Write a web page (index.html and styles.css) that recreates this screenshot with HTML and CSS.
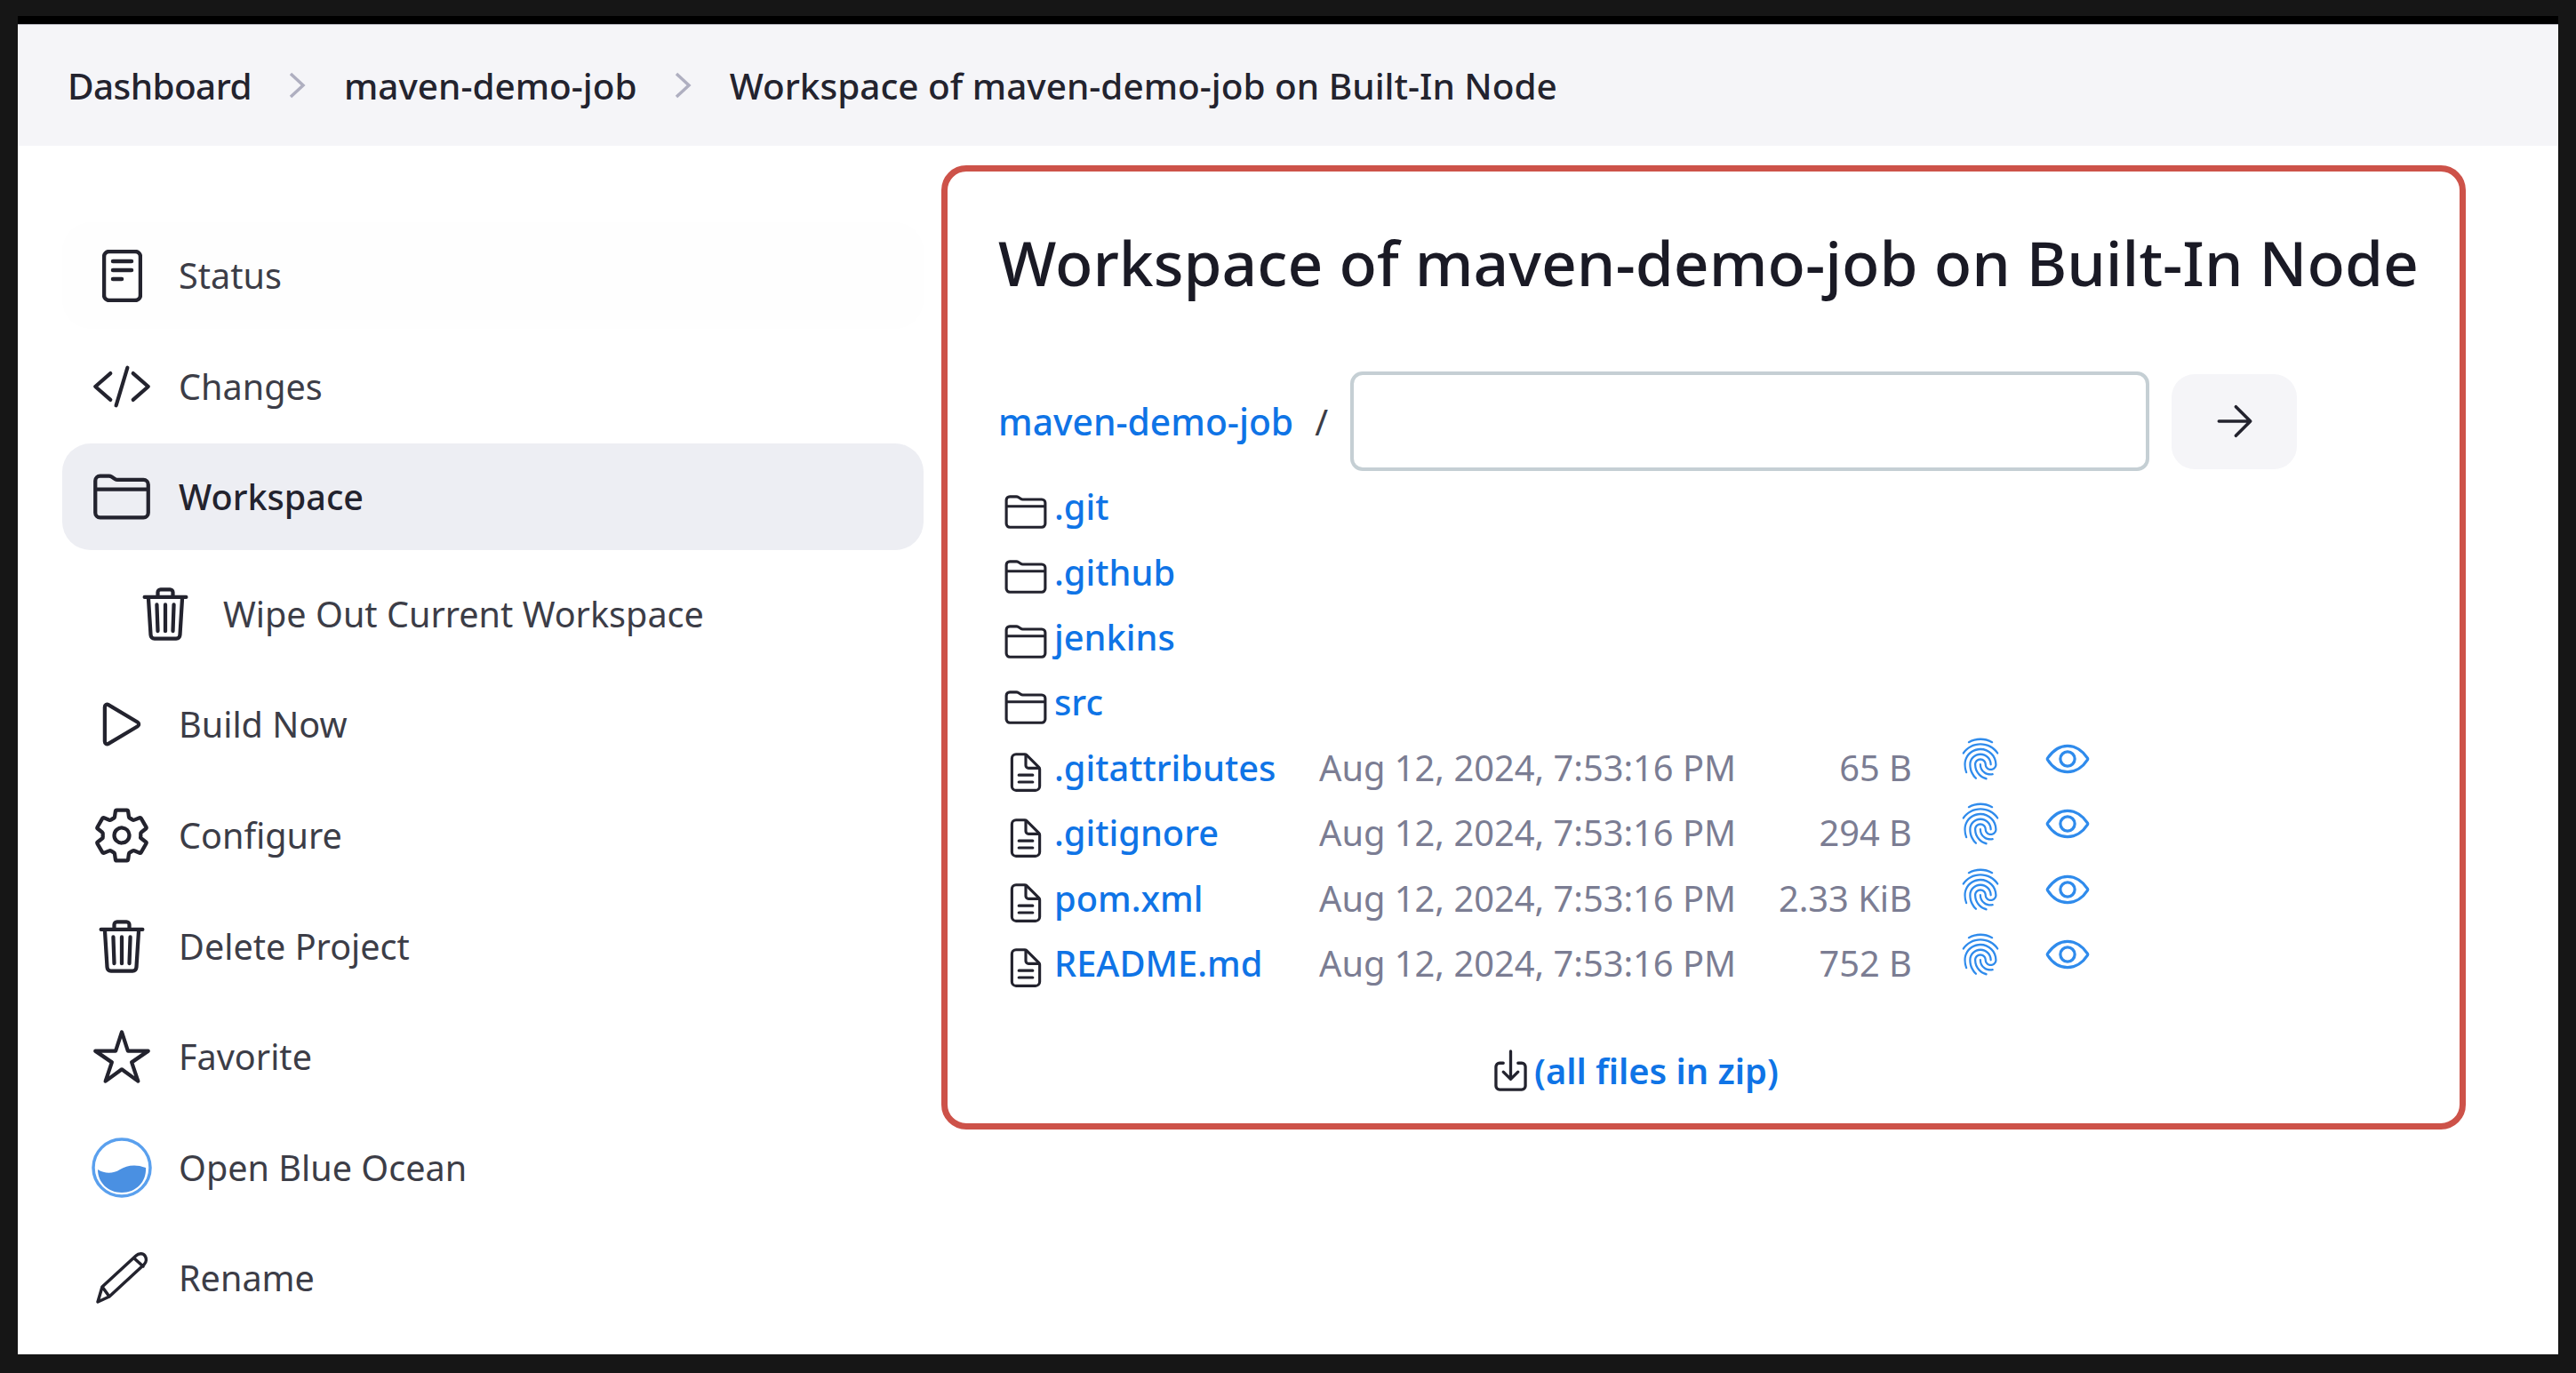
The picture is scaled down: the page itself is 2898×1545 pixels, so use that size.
FILE: index.html
```html
<!DOCTYPE html>
<html lang="en">
<head>
  <meta charset="UTF-8">
  <title>Workspace of maven-demo-job on Built-In Node</title>
  <link rel="stylesheet" href="styles.css">
</head>
<body>
  <svg class="sprites" xmlns="http://www.w3.org/2000/svg">
    <symbol id="i-code" viewBox="0 0 512 512"><path class="ln" d="M160 368L32 256l128-112M352 368l128-112-128-112M304 96l-96 320"/></symbol>
    <symbol id="i-folder" viewBox="0 0 512 512"><path class="ln" d="M440 432H72a40 40 0 01-40-40V120a40 40 0 0140-40h75.89a40 40 0 0122.19 6.72l27.84 18.56a40 40 0 0022.19 6.72H440a40 40 0 0140 40v240a40 40 0 01-40 40zM32 192h448"/></symbol>
    <symbol id="i-trash" viewBox="0 0 512 512"><path class="ln" d="M112 112l20 320c.95 18.49 14.4 32 32 32h184c17.67 0 30.87-13.51 32-32l20-320M80 112h352M192 112V72a23.93 23.93 0 0124-24h80a23.93 23.93 0 0124 24v40M256 176v224M184 176l8 224M328 176l-8 224"/></symbol>
    <symbol id="i-play" viewBox="0 0 512 512"><path class="ln" d="M112 111v290c0 17.44 17 28.52 31 20.16l247.9-148.37c12.12-7.25 12.12-26.33 0-33.58L143 90.84c-14-8.36-31 2.72-31 20.16z"/></symbol>
    <symbol id="i-gear" viewBox="0 0 512 512"><path class="ln" d="M262.29 192.31a64 64 0 1057.4 57.4 64.13 64.13 0 00-57.4-57.4zM416.39 256a154.34 154.34 0 01-1.53 20.79l45.21 35.46a10.81 10.81 0 012.45 13.75l-42.77 74a10.81 10.81 0 01-13.14 4.59l-44.9-18.08a16.11 16.11 0 00-15.17 1.75A164.48 164.48 0 01325 400.8a15.94 15.94 0 00-8.82 12.14l-6.73 47.89a11.08 11.08 0 01-10.68 9.17h-85.54a11.11 11.11 0 01-10.69-8.87l-6.72-47.82a16.07 16.07 0 00-9-12.22 155.3 155.3 0 01-21.46-12.57 16 16 0 00-15.11-1.71l-44.89 18.07a10.81 10.81 0 01-13.14-4.58l-42.77-74a10.8 10.8 0 012.45-13.75l38.21-30a16.05 16.05 0 006-14.08c-.36-4.17-.58-8.33-.58-12.5s.21-8.27.58-12.35a16 16 0 00-6.07-13.94l-38.19-30A10.81 10.81 0 0149.48 186l42.77-74a10.81 10.81 0 0113.14-4.59l44.9 18.08a16.11 16.11 0 0015.17-1.75A164.48 164.48 0 01187 111.2a15.94 15.94 0 008.82-12.14l6.73-47.89A11.08 11.08 0 01213.23 42h85.54a11.11 11.11 0 0110.69 8.87l6.72 47.82a16.07 16.07 0 009 12.22 155.3 155.3 0 0121.46 12.57 16 16 0 0015.11 1.71l44.89-18.07a10.81 10.81 0 0113.14 4.58l42.77 74a10.8 10.8 0 01-2.45 13.75l-38.21 30a16.05 16.05 0 00-6.07 14.08c.33 4.14.55 8.3.55 12.47z"/></symbol>
    <symbol id="i-star" viewBox="0 0 512 512"><path class="ln" d="M480 208H308L256 48l-52 160H32l140 96-54 160 138-100 138 100-54-160z"/></symbol>
    <symbol id="i-file" viewBox="0 0 512 512"><path class="ln" d="M416 221.25V416a48 48 0 01-48 48H144a48 48 0 01-48-48V96a48 48 0 0148-48h98.75a32 32 0 0122.62 9.37l141.26 141.26a32 32 0 019.37 22.62z"/><path class="ln" d="M256 56v120a32 32 0 0032 32h120M176 288h160M176 368h160"/></symbol>
    <symbol id="i-eye" viewBox="0 0 512 512"><path class="ln" d="M255.66 112c-77.94 0-157.89 45.11-220.83 135.33a16 16 0 00-.27 17.77C82.92 340.8 161.8 400 255.66 400c92.84 0 173.34-59.38 221.79-135.25a16.14 16.14 0 000-17.47C428.89 172.28 347.8 112 255.66 112z"/><circle class="ln" cx="256" cy="256" r="80"/></symbol>
    <symbol id="i-print" viewBox="0 0 512 512"><path fill="currentColor" d="M390.42 75.28a10.45 10.45 0 01-5.32-1.44C340.72 50.08 302.35 40 256.35 40c-45.77 0-89.23 11.28-128.76 33.84C122 77 115.11 74.8 111.87 69a12.4 12.4 0 014.63-16.32A281.81 281.81 0 01256.35 16c49.23 0 92.23 11.28 139.39 36.48a12 12 0 014.85 16.08 11.3 11.3 0 01-10.17 6.72zm-330.79 126a11.73 11.73 0 01-6.7-2.16 12.26 12.26 0 01-2.78-16.8c22.89-33.6 52-60 86.69-78.48 72.58-38.84 165.51-39.12 238.32-.24 34.68 18.48 63.8 44.64 86.69 78a12.29 12.29 0 01-2.78 16.8 11.26 11.26 0 01-16.18-2.88c-20.8-30.24-47.15-54-78.36-70.56-66.34-35.28-151.18-35.28-217.29.24-31.44 16.8-57.79 40.8-78.59 71a10 10 0 01-9.02 4.88zM204.1 491a10.66 10.66 0 01-8.09-3.6C175.9 466.48 165 453 149.55 424c-16-29.52-24.27-65.52-24.27-104.16 0-71.28 58.71-129.36 130.84-129.36S387 248.56 387 319.84a11.56 11.56 0 11-23.11 0c0-58.08-48.32-105.36-107.72-105.36S148.4 261.76 148.4 319.84c0 34.56 7.39 66.48 21.49 92.4 14.8 27.6 25 39.36 42.77 58.08a12.67 12.67 0 010 17 12.44 12.44 0 01-8.56 3.68zm165.75-44.4c-27.51 0-51.78-7.2-71.66-21.36a129.1 129.1 0 01-55-105.36 11.57 11.57 0 1123.12 0 104.28 104.28 0 0044.84 85.44c16.41 11.52 35.6 17 58.72 17a147.41 147.41 0 0024-2.4c6.24-1.2 12.25 3.12 13.4 9.84a11.92 11.92 0 01-9.47 13.92 152.28 152.28 0 01-27.95 2.88zM323.38 496a13 13 0 01-3-.48c-36.82-10.56-60.86-24.72-86.07-50.4-32.37-33.36-50.16-77.76-50.16-125.28 0-38.88 31.9-70.56 71.19-70.56s71.2 31.68 71.2 70.56c0 25.68 21.5 46.56 48.08 46.56s48.08-20.88 48.08-46.56c0-90.48-75.13-163.92-167.59-163.92-65.65 0-125.75 37.92-152.79 96.72-9 19.44-13.64 42.24-13.64 67.2 0 18.72 1.62 48.24 15.54 86.64 2.32 6.24-.69 13.2-6.7 15.36a11.34 11.34 0 01-14.79-7 276.39 276.39 0 01-16.88-95c0-28.8 5.32-55 15.77-77.76 30.75-67 98.94-110.4 173.6-110.4 105.18 0 190.71 84.24 190.71 187.92 0 38.88-31.9 70.56-71.2 70.56s-71.2-31.68-71.2-70.56c.01-25.68-21.49-46.56-48.07-46.56s-48.08 20.88-48.08 46.56c0 41 15.31 79.44 43.33 108.24 22 22.56 43 35 75.59 44.4 6.24 1.68 9.71 8.4 8.09 14.64a11.39 11.39 0 01-10.82 9.12z"/></symbol>
  </svg>

  <div class="frame">
    <nav class="crumbs">
      <a class="crumb-first">Dashboard</a>
      <svg class="chev" viewBox="0 0 20 30"><path d="M3 2l14 13L3 28"/></svg>
      <a>maven-demo-job</a>
      <svg class="chev" viewBox="0 0 20 30"><path d="M3 2l14 13L3 28"/></svg>
      <a>Workspace of maven-demo-job on Built-In Node</a>
    </nav>

    <div class="page">
      <aside class="side">
        <a class="task task-hover">
          <span class="ico"><svg class="status-ico" viewBox="0 0 45 59"><rect class="ln2" x="2" y="2" width="41" height="55" rx="6"/><path class="ln2" d="M12 13h21M12 23h21M12 33h10"/></svg></span>
          Status
        </a>
        <a class="task"><span class="ico"><svg><use href="#i-code"/></svg></span>Changes</a>
        <a class="task active"><span class="ico"><svg><use href="#i-folder"/></svg></span>Workspace</a>
        <a class="task sub"><span class="ico"><svg><use href="#i-trash"/></svg></span>Wipe Out Current Workspace</a>
        <a class="task"><span class="ico"><svg><use href="#i-play"/></svg></span>Build Now</a>
        <a class="task"><span class="ico"><svg><use href="#i-gear"/></svg></span>Configure</a>
        <a class="task"><span class="ico"><svg><use href="#i-trash"/></svg></span>Delete Project</a>
        <a class="task"><span class="ico"><svg><use href="#i-star"/></svg></span>Favorite</a>
        <a class="task">
          <span class="ico"><svg class="full" viewBox="0 0 72 72"><circle class="ocean-ring" cx="36" cy="36" r="32"/><path class="ocean-water" d="M9 38c8 5 17 5 25 0 7-4 16-7 29-2 1 16-11 28-27 28C21 64 9 53 9 38z"/></svg></span>
          Open Blue Ocean
        </a>
        <a class="task">
          <span class="ico"><svg class="full" viewBox="0 0 72 72"><path class="ln2 thin" d="M9 63l5-17L52 11c3-3 8-3 10 0s2 7-1 10L22 57zM14 46l8 11M50 14l10 9"/></svg></span>
          Rename
        </a>
      </aside>

      <main class="card">
        <h1>Workspace of maven-demo-job on Built-In Node</h1>

        <div class="path">
          <a class="link path-link">maven-demo-job</a>
          <span class="slash">/</span>
          <input class="path-input" type="text">
          <button class="go"><svg viewBox="0 0 512 512"><path class="ln" d="M268 112l144 144-144 144M392 256H100"/></svg></button>
        </div>

        <table class="files">
          <tr><td class="f-ico"><svg><use href="#i-folder"/></svg></td><td colspan="5"><a class="link">.git</a></td></tr>
          <tr><td class="f-ico"><svg><use href="#i-folder"/></svg></td><td colspan="5"><a class="link">.github</a></td></tr>
          <tr><td class="f-ico"><svg><use href="#i-folder"/></svg></td><td colspan="5"><a class="link">jenkins</a></td></tr>
          <tr><td class="f-ico"><svg><use href="#i-folder"/></svg></td><td colspan="5"><a class="link">src</a></td></tr>
          <tr>
            <td class="f-ico"><svg><use href="#i-file"/></svg></td>
            <td class="f-name"><a class="link">.gitattributes</a></td>
            <td class="f-date">Aug 12, 2024, 7:53:16 PM</td>
            <td class="f-size">65 B</td>
            <td class="f-act"><svg class="print"><use href="#i-print"/></svg></td>
            <td class="f-act"><svg class="eye"><use href="#i-eye"/></svg></td>
          </tr>
          <tr>
            <td class="f-ico"><svg><use href="#i-file"/></svg></td>
            <td class="f-name"><a class="link">.gitignore</a></td>
            <td class="f-date">Aug 12, 2024, 7:53:16 PM</td>
            <td class="f-size">294 B</td>
            <td class="f-act"><svg class="print"><use href="#i-print"/></svg></td>
            <td class="f-act"><svg class="eye"><use href="#i-eye"/></svg></td>
          </tr>
          <tr>
            <td class="f-ico"><svg><use href="#i-file"/></svg></td>
            <td class="f-name"><a class="link">pom.xml</a></td>
            <td class="f-date">Aug 12, 2024, 7:53:16 PM</td>
            <td class="f-size">2.33 KiB</td>
            <td class="f-act"><svg class="print"><use href="#i-print"/></svg></td>
            <td class="f-act"><svg class="eye"><use href="#i-eye"/></svg></td>
          </tr>
          <tr>
            <td class="f-ico"><svg><use href="#i-file"/></svg></td>
            <td class="f-name"><a class="link">README.md</a></td>
            <td class="f-date">Aug 12, 2024, 7:53:16 PM</td>
            <td class="f-size">752 B</td>
            <td class="f-act"><svg class="print"><use href="#i-print"/></svg></td>
            <td class="f-act"><svg class="eye"><use href="#i-eye"/></svg></td>
          </tr>
        </table>

        <div class="zip">
          <svg viewBox="0 0 512 512"><path class="ln" d="M336 176h40a40 40 0 0140 40v208a40 40 0 01-40 40H136a40 40 0 01-40-40V216a40 40 0 0140-40h40M176 272l80 80 80-80M256 48v288"/></svg>
          <a class="link">(all files in zip)</a>
        </div>
      </main>
    </div>
  </div>
</body>
</html>
```

FILE: styles.css
```css
* {
  box-sizing: border-box;
}
html, body {
  height: 100%;
}
body {
  margin: 0;
  padding: 18px 20px 21px;
  background: #161616;
  font-family: "Noto Sans", "Open Sans", sans-serif;
  color: #3c3d47;
}
svg {
  color: #23232e;
}
.sprites {
  display: none;
}
.ln {
  fill: none;
  stroke: currentColor;
  stroke-width: 32;
  stroke-linecap: round;
  stroke-linejoin: round;
}
.ln2 {
  fill: none;
  stroke: #23232e;
  stroke-width: 4.5;
  stroke-linecap: round;
  stroke-linejoin: round;
}
.thin {
  stroke-width: 3.5;
}

.frame {
  height: 100%;
  background: #fff;
  border-top: 9px solid #000;
}
.crumbs {
  height: 137px;
  padding-left: 56px;
  display: flex;
  align-items: center;
  background: #f5f5f8;
  border-top: 1px solid #b4b4bb;
  font-size: 40.5px;
  font-weight: 500;
  color: #23232e;
}
.crumb-first {
  letter-spacing: -0.6px;
}
.chev {
  width: 20px;
  height: 30px;
  margin: 0 43px 0 41px;
}
.chev path {
  fill: none;
  stroke: #afafc0;
  stroke-width: 3.5;
}

.page {
  display: flex;
  gap: 20px;
  padding-left: 50px;
}
.side {
  width: 969px;
  padding-top: 86px;
  display: flex;
  flex-direction: column;
  gap: 4.6px;
}
.task {
  height: 120px;
  padding-left: 31px;
  display: flex;
  align-items: center;
  gap: 28px;
  border-radius: 32px;
  font-size: 39.6px;
}
.task-hover {
  background: #fefefe;
}
.active {
  background: #edeef3;
  color: #23232e;
  font-weight: 500;
}
.sub {
  margin-top: 7px;
  padding-left: 80px;
  gap: 29px;
}
.ico {
  width: 72px;
  height: 72px;
  display: flex;
  align-items: center;
  justify-content: center;
}
.ico svg {
  width: 68px;
  height: 68px;
}
.ico .full {
  width: 72px;
  height: 72px;
}
.ico .status-ico {
  width: 45px;
  height: 59px;
}
.ocean-ring {
  fill: none;
  stroke: #5aa0ee;
  stroke-width: 3.5;
}
.ocean-water {
  fill: #4a90e2;
}

.card {
  width: 1715px;
  height: 1085px;
  margin-top: 22px;
  padding: 0 0 0 57px;
  border: 7px solid #cd5249;
  border-radius: 28px;
}
h1 {
  margin: 0;
  padding-top: 54px;
  height: 225px;
  font-size: 69.5px;
  line-height: 96px;
  font-weight: 500;
  color: #1a1a25;
  white-space: nowrap;
}
.link {
  color: #0f74e6;
  font-weight: 500;
}
.path {
  display: flex;
  align-items: center;
  height: 112px;
  font-size: 40px;
}
.path-link {
  font-size: 40.8px;
}
.slash {
  margin: 0 25px 0 24px;
}
.path-input {
  width: 899px;
  height: 112px;
  border: 4px solid #c5cfd4;
  border-radius: 14px;
  background: #fff;
}
.go {
  width: 141px;
  height: 107px;
  margin-left: 25px;
  padding: 0;
  display: flex;
  align-items: center;
  justify-content: center;
  border: none;
  border-radius: 26px;
  background: #f5f5f8;
}
.go svg {
  width: 58px;
  height: 58px;
}

.files {
  margin-top: 3px;
  border-collapse: collapse;
  table-layout: fixed;
  font-size: 39.8px;
}
.files td {
  height: 73.4px;
  padding: 0;
  white-space: nowrap;
}
.f-ico {
  width: 63px;
  padding-top: 12px !important;
}
.f-ico svg {
  display: block;
  width: 50px;
  height: 50px;
  margin-left: 6px;
}
.f-name {
  width: 298px;
}
.f-date {
  width: 506px;
  color: #7b7d93;
}
.f-size {
  width: 161px;
  text-align: right;
  color: #7b7d93;
}
.f-act {
  width: 96px;
  padding: 0 0 19px 0 !important;
}
.f-act svg {
  display: block;
  color: #2f8bec;
}
.print {
  width: 50px;
  height: 50px;
  margin-left: 52px;
}
.eye {
  width: 52px;
  height: 52px;
  margin-left: 47px;
}
.zip {
  margin-top: 57px;
  padding-left: 550px;
  display: flex;
  align-items: center;
  gap: 0;
  font-size: 39.8px;
}
.zip .link {
  font-weight: 600;
}
.zip svg {
  width: 53px;
  height: 53px;
}
```
